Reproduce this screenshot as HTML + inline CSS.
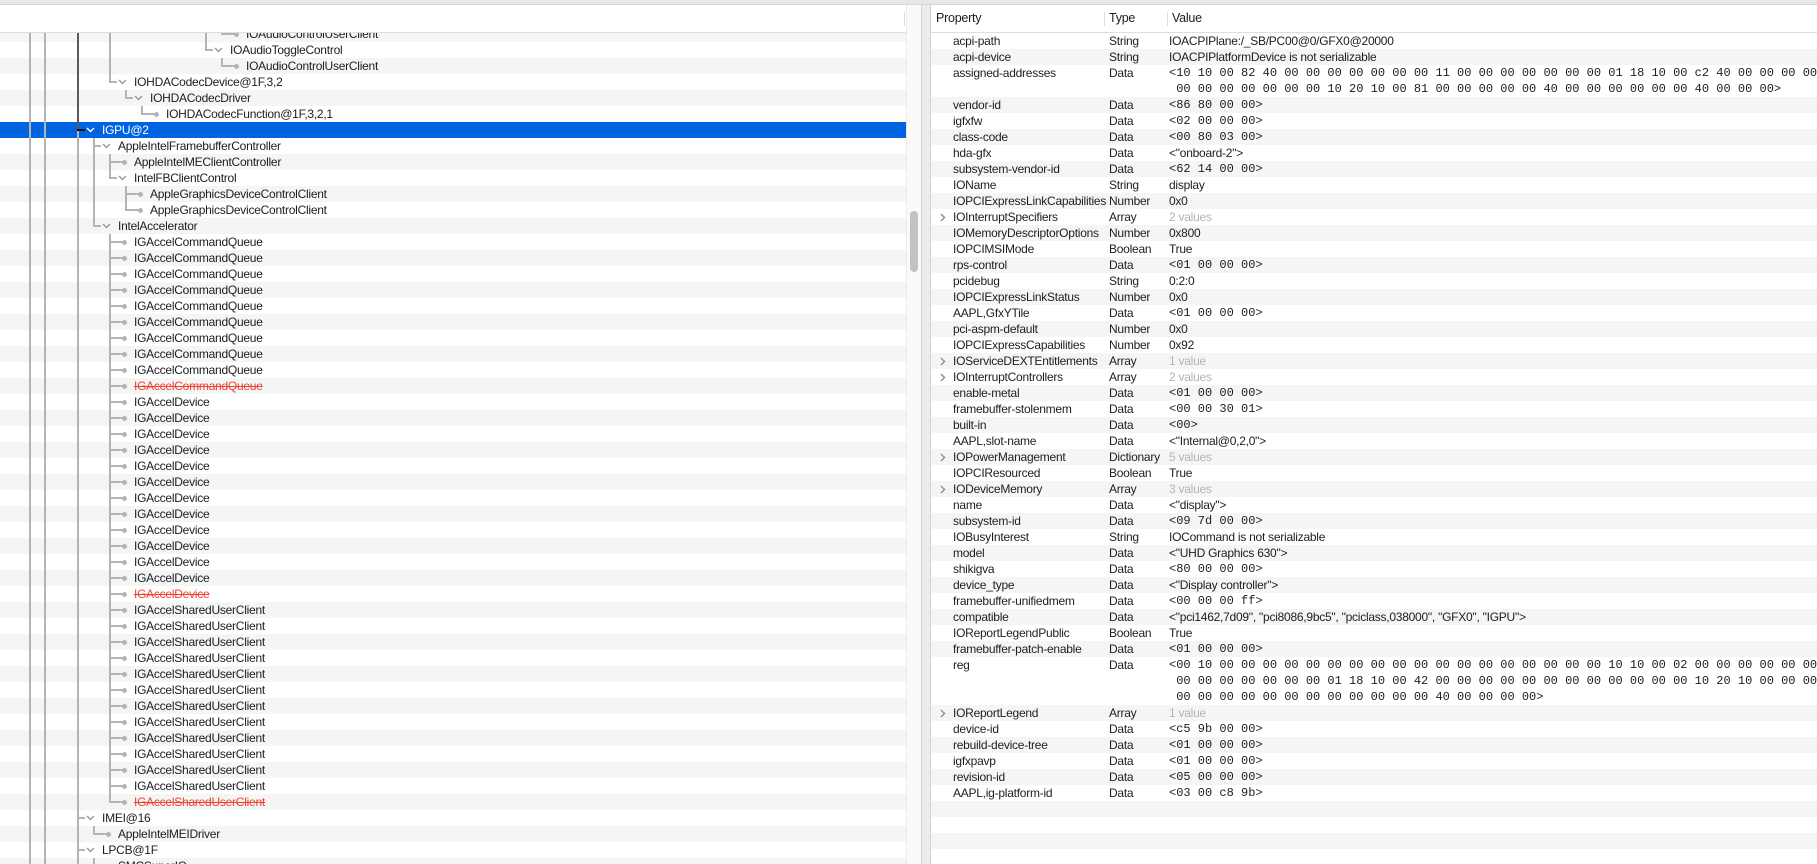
<!DOCTYPE html>
<html><head><meta charset="utf-8">
<style>
*{margin:0;padding:0;box-sizing:border-box}
html,body{width:1817px;height:864px;overflow:hidden;background:#fff;font-family:"Liberation Sans",Helvetica,sans-serif;font-size:12px;letter-spacing:-0.25px;color:#1d1d1d}
#top{position:absolute;left:0;top:0;width:1817px;height:5px;background:#e7e7e7;border-bottom:1px solid #d6d6d6}
#left{position:absolute;left:0;top:5px;width:906px;height:859px;overflow:hidden}
#lhead{position:absolute;left:0;top:0;width:906px;height:28px;background:#fff;border-bottom:1px solid #dedede;z-index:5}
#lhead .dv{position:absolute;left:904px;top:7px;width:1px;height:14px;background:#dcdcdc}
#sb{position:absolute;left:906px;top:5px;width:15px;height:859px;background:#fafafa;border-left:1px solid #ececec}
#thumb{position:absolute;left:910px;top:211px;width:8px;height:61px;border-radius:4px;background:#c2c2c2}
#split{position:absolute;left:921px;top:5px;width:10px;height:859px;background:#ececec;border-left:1px solid #d4d4d4;border-right:1px solid #d4d4d4}
#right{position:absolute;left:931px;top:5px;width:886px;height:859px;overflow:hidden}
#rhead{position:absolute;left:0;top:0;width:886px;height:28px;border-bottom:1px solid #dedede;background:#fff;font-size:12.5px}
#rhead span{position:absolute;top:6px}
#rhead .dv{position:absolute;top:7px;width:1px;height:14px;background:#dcdcdc}
.row{position:absolute;left:0;height:16px;line-height:16px;white-space:nowrap}
.g{background:#f4f5f5}
.t{position:absolute;top:0}
.red{color:#f0412e;text-decoration:line-through}
.sel{background:#0063e1;color:#fff}
.ln{position:absolute;background:#b4b4b4}
.dot{position:absolute;width:5px;height:5px;border-radius:50%;background:#b4b4b4}
.mono{font-family:"Liberation Mono",Menlo,monospace;font-size:12px;letter-spacing:0}
.gray{color:#b3b3b3}
svg{position:absolute}
</style></head><body>
<div id="top"></div>
<div id="left"><div id="lhead"><div class="dv"></div></div><div id="lbody"></div></div>
<div id="sb"></div><div id="thumb"></div>
<div id="split"></div>
<div id="right"><div id="rhead"><span style="left:5px">Property</span><div class="dv" style="left:173px"></div><span style="left:178px">Type</span><div class="dv" style="left:236px"></div><span style="left:241px">Value</span></div><div id="rbody"></div></div>
<script>
var L=[
["IOAudioControlUserClient",9,0],["IOAudioToggleControl",8,1],["IOAudioControlUserClient",9,0],
["IOHDACodecDevice@1F,3,2",2,1],["IOHDACodecDriver",3,1],["IOHDACodecFunction@1F,3,2,1",4,0],
["IGPU@2",0,1],["AppleIntelFramebufferController",1,1],["AppleIntelMEClientController",2,0],
["IntelFBClientControl",2,1],["AppleGraphicsDeviceControlClient",3,0],["AppleGraphicsDeviceControlClient",3,0],
["IntelAccelerator",1,1]];
var i;
for(i=0;i<9;i++)L.push(["IGAccelCommandQueue",2,0]);L.push(["IGAccelCommandQueue",2,0,1]);
for(i=0;i<12;i++)L.push(["IGAccelDevice",2,0]);L.push(["IGAccelDevice",2,0,1]);
for(i=0;i<12;i++)L.push(["IGAccelSharedUserClient",2,0]);L.push(["IGAccelSharedUserClient",2,0,1]);
L.push(["IMEI@16",0,1],["AppleIntelMEIDriver",1,0],["LPCB@1F",0,1],["SMCSuperIO",1,0]);
var h='',Y0=21,SEL=6;
for(i=-1;i<55;i++){var y=Y0+16*i;h+='<div class="row'+(((i%2)+2)%2==0?' g':'')+(i==SEL?' sel':'')+'" style="top:'+y+'px;width:906px"></div>';}
function vl(x,y1,y2,c){h+='<div class="ln" style="left:'+x+'px;top:'+y1+'px;width:2px;height:'+(y2-y1)+'px'+(c?';background:'+c:'')+'"></div>';}
vl(29,0,900);vl(44,0,900);
vl(77,0,Y0+16*SEL+8,'#5a5a5a');vl(77,Y0+16*SEL+8,900);
vl(109,0,Y0+16*3+8);vl(205,0,Y0+16*1+8);
function hasLater(k){var l=L[k][1];for(var m=k+1;m<L.length;m++){if(L[m][1]<l)return false;if(L[m][1]==l)return true;}return k==L.length-1;}
for(i=0;i<L.length;i++){
 var r=L[i],l=r[1],y=Y0+16*i,tx=102+16*l,vx=77+16*l,sel=i==SEL;
 var c=sel?'#111':null;
 if(l!=0) vl(vx,y,hasLater(i)?y+16:y+9,null);
 for(var a=1;a<l;a++){var k=-1;for(var m=i-1;m>=0;m--){if(L[m][1]<a)break;if(L[m][1]==a){k=m;break;}}if(k>=0&&hasLater(k)&&!(a==2&&i<=3))vl(77+16*a,y,y+16);}
 if(r[2]){h+='<div class="ln" style="left:'+vx+'px;top:'+(y+7)+'px;width:'+(tx-17-vx)+'px;height:2px'+(c?';background:'+c:'')+'"></div>';
  h+='<svg style="left:'+(tx-16)+'px;top:'+(y+4)+'px" width="9" height="8"><path d="M1 2 L4.5 5.5 L8 2" fill="none" stroke="'+(sel?'#fff':'#9a9a9a')+'" stroke-width="1.4"/></svg>';}
 else{h+='<div class="ln" style="left:'+vx+'px;top:'+(y+7)+'px;width:'+(tx-11-vx)+'px;height:2px"></div><div class="dot" style="left:'+(tx-12)+'px;top:'+(y+5.5)+'px"></div>';}
 h+='<div class="row'+(r[3]?' red':'')+'" style="top:'+y+'px;left:'+tx+'px;'+(sel?'color:#fff':'')+'">'+r[0]+'</div>';
}
document.getElementById('lbody').innerHTML=h;

var R=[
["acpi-path","String",["IOACPIPlane:/_SB/PC00@0/GFX0@20000"]],
["acpi-device","String",["IOACPIPlatformDevice is not serializable"]],
["assigned-addresses","Data",["<10 10 00 82 40 00 00 00 00 00 00 00 11 00 00 00 00 00 00 00 01 18 10 00 c2 40 00 00 00 00 00 00 00 00 00"," 00 00 00 00 00 00 00 10 20 10 00 81 00 00 00 00 00 40 00 00 00 00 00 00 40 00 00 00>"],1],
["vendor-id","Data",["<86 80 00 00>"],1],["igfxfw","Data",["<02 00 00 00>"],1],["class-code","Data",["<00 80 03 00>"],1],
["hda-gfx","Data",['<"onboard-2">']],["subsystem-vendor-id","Data",["<62 14 00 00>"],1],
["IOName","String",["display"]],["IOPCIExpressLinkCapabilities","Number",["0x0"]],
["IOInterruptSpecifiers","Array",["2 values"],2],["IOMemoryDescriptorOptions","Number",["0x800"]],
["IOPCIMSIMode","Boolean",["True"]],["rps-control","Data",["<01 00 00 00>"],1],["pcidebug","String",["0:2:0"]],
["IOPCIExpressLinkStatus","Number",["0x0"]],["AAPL,GfxYTile","Data",["<01 00 00 00>"],1],
["pci-aspm-default","Number",["0x0"]],["IOPCIExpressCapabilities","Number",["0x92"]],
["IOServiceDEXTEntitlements","Array",["1 value"],2],["IOInterruptControllers","Array",["2 values"],2],
["enable-metal","Data",["<01 00 00 00>"],1],["framebuffer-stolenmem","Data",["<00 00 30 01>"],1],
["built-in","Data",["<00>"],1],["AAPL,slot-name","Data",['<"Internal@0,2,0">']],
["IOPowerManagement","Dictionary",["5 values"],2],["IOPCIResourced","Boolean",["True"]],
["IODeviceMemory","Array",["3 values"],2],["name","Data",['<"display">']],["subsystem-id","Data",["<09 7d 00 00>"],1],
["IOBusyInterest","String",["IOCommand is not serializable"]],["model","Data",['<"UHD Graphics 630">']],
["shikigva","Data",["<80 00 00 00>"],1],["device_type","Data",['<"Display controller">']],
["framebuffer-unifiedmem","Data",["<00 00 00 ff>"],1],
["compatible","Data",['<"pci1462,7d09", "pci8086,9bc5", "pciclass,038000", "GFX0", "IGPU">']],
["IOReportLegendPublic","Boolean",["True"]],["framebuffer-patch-enable","Data",["<01 00 00 00>"],1],
["reg","Data",["<00 10 00 00 00 00 00 00 00 00 00 00 00 00 00 00 00 00 00 00 10 10 00 02 00 00 00 00 00 00 00 00 00"," 00 00 00 00 00 00 00 01 18 10 00 42 00 00 00 00 00 00 00 00 00 00 00 00 10 20 10 00 00 00 00"," 00 00 00 00 00 00 00 00 00 00 00 00 40 00 00 00 00>"],1],
["IOReportLegend","Array",["1 value"],2],["device-id","Data",["<c5 9b 00 00>"],1],
["rebuild-device-tree","Data",["<01 00 00 00>"],1],["igfxpavp","Data",["<01 00 00 00>"],1],
["revision-id","Data",["<05 00 00 00>"],1],["AAPL,ig-platform-id","Data",["<03 00 c8 9b>"],1]];
function esc(s){return s.replace(/&/g,'&amp;').replace(/</g,'&lt;').replace(/>/g,'&gt;').replace(/ /g,'&nbsp;');}
var g='',y=28,n=0;
for(i=0;i<R.length;i++){var r=R[i],hh=16*r[2].length;
 g+='<div class="row'+(n%2?' g':'')+'" style="top:'+y+'px;width:886px;height:'+hh+'px">';
 if(r[3]==2)g+='<svg style="left:8px;top:4px" width="8" height="9"><path d="M2 1 L5.5 4.5 L2 8" fill="none" stroke="#8a8a8a" stroke-width="1.3"/></svg>';
 g+='<span class="t" style="left:22px">'+esc(r[0])+'</span><span class="t" style="left:178px">'+r[1]+'</span>';
 for(var j=0;j<r[2].length;j++)g+='<span class="t'+(r[3]==1?' mono':'')+(r[3]==2?' gray':'')+'" style="left:238px;top:'+(16*j)+'px">'+esc(r[2][j])+'</span>';
 g+='</div>';y+=hh;n++;}
for(;y<870;y+=16){g+='<div class="row'+(n%2?' g':'')+'" style="top:'+y+'px;width:886px"></div>';n++;}
document.getElementById('rbody').innerHTML=g;
</script>
</body></html>
